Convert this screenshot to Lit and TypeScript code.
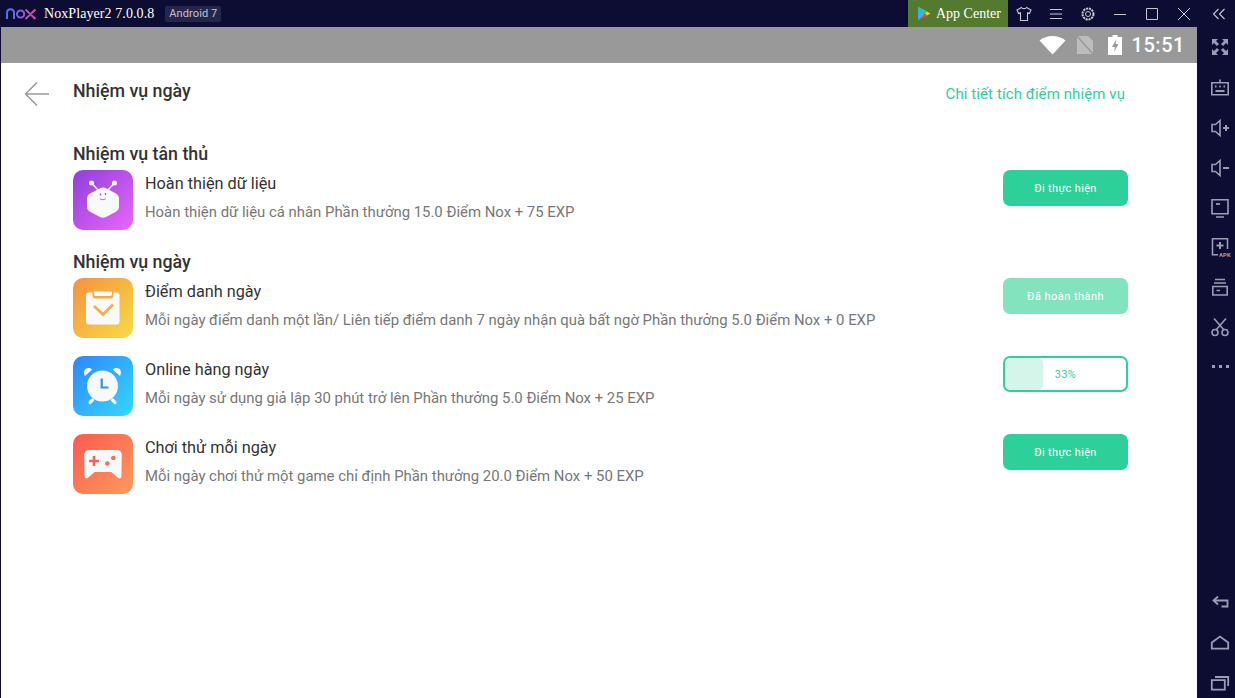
import { LitElement, html, css, svg } from "lit";
import { customElement } from "lit/decorators.js";

const sideIcon = (body: unknown, w = 22, h = 22) => html`<svg width=${w} height=${h} viewBox="0 0 22 22" fill="none" stroke="#9c9db3" stroke-width="1.6">${body}</svg>`;

const sideTop = [
  { icon: svg`<path fill="#9c9db3" stroke="none" d="M3 3h6l-2 2 3 3-2 2-3-3-2 2zM19 3v6l-2-2-3 3-2-2 3-3-2-2zM3 19v-6l2 2 3-3 2 2-3 3 2 2zM19 19h-6l2-2-3-3 2-2 3 3 2-2z"/>` },
  { icon: svg`<path d="M2.800 6.800h16.400v12H2.800zM11 6.500V3.500"/><path d="M6 10.500h1.500M10.200 10.500h1.500M14.500 10.500h1.500M6.500 15h9" stroke-width="1.800"/>` },
  { icon: svg`<path d="M3 8.500h3.500L11 4.500v15l-4.500-4H3z"/><path d="M14 12h6M17 9v6" stroke-width="2"/>` },
  { icon: svg`<path d="M3 8.500h3.500L11 4.500v15l-4.500-4H3z"/><path d="M14 12h6" stroke-width="2"/>` },
  { icon: svg`<path d="M3 3.800h16v14H3zM7 21h8"/><path d="M7 8h4" stroke-width="1.800"/>` },
  { icon: svg`<path d="M18.500 13V2.800h-15v16H9"/><path d="M11 6v7M7.500 9.500h7" stroke-width="2"/>`, apk: true },
  { icon: svg`<path d="M6 3.500h10M5 7h12M3.800 10.500h14.400v8.500H3.800zM7.500 14.500h3.500"/>` },
  { icon: svg`<path d="M5 2.500 15 14M17 2.500 7 14"/><circle cx="6" cy="16.500" r="3"/><circle cx="16" cy="16.500" r="3"/>` },
  { icon: svg`<path fill="#9c9db3" stroke="none" d="M3 9h3v3H3zM10 9h3v3h-3zM17 9h3v3h-3z"/>` },
];

const sideBottom = [
  svg`<path d="M9 5.500 4.500 9.500 9 13.500M5 9.500h13.500v6h-6" stroke-width="1.800"/>`,
  svg`<path d="M2.800 11.500 11 5.500l8.200 6v6.200H2.800z" stroke-width="1.800"/>`,
  svg`<path d="M2.800 9.200h13v9.500h-13zM6 6H19.200v9" stroke-width="1.800"/>`,
];

const iconProfile = svg`<svg width="60" height="60" viewBox="0 0 60 60">
  <defs><linearGradient id="a" x1="0" y1="0" x2="1" y2="1"><stop offset="0" stop-color="#8f3fd8"/><stop offset="1" stop-color="#ea66fb"/></linearGradient></defs>
  <rect width="60" height="60" rx="10" fill="url(#a)"/>
  <path d="M30 17.500c1 0 2 .3 3 .8l9.500 5c2 1 3.500 3 3.500 5v8.500c0 2-1.200 4-3 5l-10 5.200c-2 1-4 1-6 0l-10-5.200c-1.800-1-3-3-3-5v-8.500c0-2 1.500-4 3.500-5l9.500-5c1-.5 2-.8 3-.8z" fill="#f8f9fb"/>
  <path d="M25 20l-6-6.500M35 20l6-6.500" stroke="#f8f9fb" stroke-width="1.500"/>
  <circle cx="18.500" cy="13" r="2.500" fill="#f8f9fb"/><circle cx="41.500" cy="13" r="2.500" fill="#f8f9fb"/>
  <path d="M27.500 23.500v2M32.500 23v2" stroke="#a64be0" stroke-width="1.300"/>
  <path d="M27 28.500c1 1.600 4.500 1.600 5.500 0" stroke="#c75be8" stroke-width="1.100" fill="none"/>
</svg>`;

const iconCheck = svg`<svg width="60" height="60" viewBox="0 0 60 60">
  <defs><linearGradient id="b" x1="0" y1="0" x2="1" y2="1"><stop offset="0" stop-color="#f6913f"/><stop offset="1" stop-color="#f6dc45"/></linearGradient></defs>
  <rect width="60" height="60" rx="10" fill="url(#b)"/>
  <rect x="13" y="14.500" width="33.500" height="32" rx="3" fill="#f8f9fb"/>
  <path d="M19.500 12.500h21v5a3 3 0 0 1-3 3h-15a3 3 0 0 1-3-3z" fill="#f8a94a"/>
  <path d="M21 13.500h18v2.500a2 2 0 0 1-2 2H23a2 2 0 0 1-2-2z" fill="#f8f9fb"/>
  <path d="M21 28l9 8.500 10-10" fill="none" stroke="#f7ae45" stroke-width="2.800"/>
</svg>`;

const iconClock = svg`<svg width="60" height="60" viewBox="0 0 60 60">
  <defs><linearGradient id="c" x1="0" y1="0" x2="1" y2="1"><stop offset="0" stop-color="#2f86fb"/><stop offset="1" stop-color="#33d8ff"/></linearGradient></defs>
  <rect width="60" height="60" rx="10" fill="url(#c)"/>
  <circle cx="29.500" cy="30" r="15.500" fill="#f8f9fb"/>
  <path d="M12 20c-1.500-2-1.200-6 .8-7.200 2.500-1.500 5-1 6.200 1zM47 20c1.500-2 1.200-6-.8-7.200-2.500-1.500-5-1-6.200 1z" fill="#f8f9fb"/>
  <path d="M19.500 44l-2.500 2.500M39.500 44l2.500 2.500" stroke="#f8f9fb" stroke-width="3.200" stroke-linecap="round"/>
  <path d="M28.700 22.500v9h6.800" fill="none" stroke="#2f8ffb" stroke-width="2.200"/>
</svg>`;

const iconGame = svg`<svg width="60" height="60" viewBox="0 0 60 60">
  <defs><linearGradient id="d" x1="0" y1="0" x2="1" y2="1"><stop offset="0" stop-color="#fb5a50"/><stop offset="1" stop-color="#fe9a5c"/></linearGradient></defs>
  <rect width="60" height="60" rx="10" fill="url(#d)"/>
  <path d="M16 16h28c2.800 0 4.500 2 4.800 4.500L48.500 42c0 2-1.700 3-3.200 2l-7-6H21.700l-7 6c-1.500 1-3.200 0-3.200-2l-.3-21.500C11.500 18 13.200 16 16 16z" fill="#f8f9fb"/>
  <path d="M16 27h10M21 22v10" stroke="#f9625a" stroke-width="2.600"/>
  <circle cx="34.300" cy="29.500" r="2.300" fill="#f9715a"/><circle cx="40.300" cy="24" r="2.300" fill="#f9715a"/>
</svg>`;

interface Task { icon: unknown; title: string; desc: string; action: "go" | "done" | "progress"; }

const firstTasks: Task[] = [
  { icon: iconProfile, title: "Hoàn thiện dữ liệu", desc: "Hoàn thiện dữ liệu cá nhân Phần thưởng 15.0 Điểm Nox + 75 EXP", action: "go" },
];
const dailyTasks: Task[] = [
  { icon: iconCheck, title: "Điểm danh ngày", desc: "Mỗi ngày điểm danh một lần/ Liên tiếp điểm danh 7 ngày nhận quà bất ngờ Phần thưởng 5.0 Điểm Nox + 0 EXP", action: "done" },
  { icon: iconClock, title: "Online hàng ngày", desc: "Mỗi ngày sử dụng giả lập 30 phút trở lên Phần thưởng 5.0 Điểm Nox + 25 EXP", action: "progress" },
  { icon: iconGame, title: "Chơi thử mỗi ngày", desc: "Mỗi ngày chơi thử một game chỉ định Phần thưởng 20.0 Điểm Nox + 50 EXP", action: "go" },
];

@customElement("app-root")
export class AppRoot extends LitElement {
  static styles = css`
    :host { display: block; width: 1235px; height: 698px; overflow: hidden; background: #0d0d33; font-family: Roboto, "Noto Sans", sans-serif; }
    .titlebar { height: 27px; display: flex; align-items: center; color: #fff; }
    .logo { margin-left: 5px; width: 32px; height: 14px; }
    .name { margin-left: 7px; font: 14px "Liberation Serif", serif; letter-spacing: .08px; white-space: nowrap; }
    .badge { margin-left: 11px; background: #26264a; color: #c3c3cf; font-size: 11px; border-radius: 2px; height: 16px; line-height: 16px; padding: 0 4px; letter-spacing: .1px; white-space: nowrap; }
    .spacer { flex: 1; }
    .appcenter { width: 100px; height: 27px; background: #547a30; display: flex; align-items: center; gap: 5px; padding-left: 9px; box-sizing: border-box; font: 14px "Liberation Serif", serif; white-space: nowrap; }
    .tool { display: flex; width: 32px; justify-content: center; align-items: center; }
    .collapse { margin-left: 3px; width: 32px; display: flex; justify-content: center; }
    .main { display: flex; height: 671px; }
    .screen { width: 1196px; margin-left: 1px; background: #fff; display: flex; flex-direction: column; }
    .status { height: 36px; background: #999; display: flex; align-items: center; justify-content: flex-end; padding-right: 12px; color: #fff; flex: none; }
    .clock { font-size: 20px; font-weight: 500; margin-left: 10px; letter-spacing: .55px; }
    .status svg { display: block; }
    .sim { margin-left: 10px; }
    .batt { margin-left: 14px; }
    .head { display: flex; align-items: center; height: 61px; flex: none; }
    .back { margin-left: 23px; width: 27px; height: 26px; }
    .head h1 { margin: -6px 0 0 22px; font-size: 17.800px; font-weight: 500; color: #333; flex: 1; }
    .link { color: #2ed09a; font-size: 15px; margin-right: 72px; letter-spacing: .09px; }
    .body { padding: 19px 69px 0 72px; }
    h2 { margin: 0 0 6px; font-size: 17.800px; line-height: 21px; font-weight: 500; color: #333; }
    .section { margin-bottom: 21px; }
    .row { display: flex; height: 60px; margin-bottom: 18px; }
    .row:last-child { margin-bottom: 0; }
    .ic { width: 60px; height: 60px; flex: none; }
    .ic svg { display: block; }
    .text { flex: 1; margin-left: 12px; padding-top: 3px; }
    .title { font-size: 16.250px; line-height: 22px; color: #333; }
    .desc { margin-top: 7px; font-size: 14.900px; line-height: 20px; color: #777; white-space: nowrap; }
    .btn { width: 125px; height: 36px; border-radius: 7px; background: #2ed09a; color: #fff; font-size: 11px; display: flex; align-items: center; justify-content: center; letter-spacing: .35px; flex: none; }
    .btn.done { background: #82e3bf; letter-spacing: .45px; }
    .btn.progress { background: #fff; box-sizing: border-box; border: 2px solid #2ed09a; color: #2ed09a; position: relative; overflow: hidden; }
    .fill { position: absolute; left: 0; top: 0; bottom: 0; border-radius: 5px; background: #d5f5ea; }
    .pct { position: relative; }
    .side { width: 38px; display: flex; flex-direction: column; padding-top: 9px; box-sizing: border-box; }
    .sbtn { height: 40px; padding-left: 12px; position: relative; }
    .apk { position: absolute; left: 22px; top: 15px; font-size: 6px; line-height: 7px; font-weight: 700; color: #9c9db3; }
    .bot { height: 40px; box-sizing: border-box; padding: 13px 0 0 12px; }
  `;

  private action(t: Task) {
    if (t.action === "done") return html`<div class="btn done">Đã hoàn thành</div>`;
    if (t.action === "progress") return html`<div class="btn progress"><div class="fill" style="width: 31%"></div><span class="pct">33%</span></div>`;
    return html`<div class="btn">Đi thực hiện</div>`;
  }

  private row(t: Task) {
    return html`<div class="row">
      <div class="ic">${t.icon}</div>
      <div class="text"><div class="title">${t.title}</div><div class="desc">${t.desc}</div></div>
      ${this.action(t)}
    </div>`;
  }

  render() {
    return html`
      <div class="titlebar">
        <svg class="logo" viewBox="0 0 32 14" fill="none" stroke-width="2">
          <defs><linearGradient id="nx" x1="0" x2="1" y1="0" y2="0"><stop offset="0" stop-color="#3f7bf0"/><stop offset=".5" stop-color="#8a5fd8"/><stop offset="1" stop-color="#ef3f95"/></linearGradient></defs>
          <path stroke="url(#nx)" d="M2 12V6c0-5 7-5 7 0v6M12 7a3.600 3.600 0 1 0 7.200 0 3.600 3.600 0 1 0-7.200 0M20.500 2.500 30.500 12M30.500 2.500 20.500 12"/>
        </svg>
        <span class="name">NoxPlayer2 7.0.0.8</span>
        <span class="badge">Android 7</span>
        <div class="spacer"></div>
        <div class="appcenter">
          <svg width="14" height="15" viewBox="0 0 14 15"><path d="M1 .5 8 7.500 1 14.500z" fill="#2fb6f2"/><path d="M1 .5 10 5.500 8 7.500z" fill="#3ccf6b"/><path d="M1 14.500 10 9.500 8 7.500z" fill="#ef4a4a"/><path d="M10 5.500 13.500 7.500 10 9.500 8 7.500z" fill="#f8c92f"/></svg>
          App Center
        </div>
        <div class="tool"><svg width="16" height="16" viewBox="0 0 16 16" fill="none" stroke="#c9c9d6" stroke-width="1.100"><path d="M5.500 1.500c.8 1.500 4.200 1.500 5 0L15 4l-1.500 3.500-2-.7V14.500h-7V6.800l-2 .7L1 4z"/></svg></div>
        <div class="tool"><svg width="14" height="14" viewBox="0 0 14 14" stroke="#c9c9d6" stroke-width="1"><path d="M1 2.500h12M1 7h12M1 11.500h12"/></svg></div>
        <div class="tool"><svg width="16" height="16" viewBox="0 0 16 16" fill="none" stroke="#c9c9d6"><circle cx="8" cy="8" r="2.500"/><circle cx="8" cy="8" r="5.500" stroke-width="2" stroke-dasharray="2.100 .8"/></svg></div>
        <div class="tool"><svg width="14" height="14" viewBox="0 0 14 14" stroke="#c9c9d6"><path d="M1 7.500h12"/></svg></div>
        <div class="tool"><svg width="14" height="14" viewBox="0 0 14 14" fill="none" stroke="#c9c9d6"><path d="M1.500 1.500h11v11h-11z"/></svg></div>
        <div class="tool"><svg width="14" height="14" viewBox="0 0 14 14" stroke="#c9c9d6"><path d="M1 1l12 12M13 1 1 13"/></svg></div>
        <div class="collapse"><svg width="14" height="12" viewBox="0 0 14 12" fill="none" stroke="#c9c9d6" stroke-width="1.100"><path d="M6.500 1 1.500 6l5 5M12.500 1l-5 5 5 5"/></svg></div>
      </div>
      <div class="main">
        <div class="screen">
          <div class="status">
            <svg width="27" height="20" viewBox="0 0 27 20"><path d="M13.500 19.500.5 5.500C7.500-.5 19.500-.5 26.500 5.500z" fill="#fff"/></svg>
            <svg class="sim" width="18" height="20" viewBox="0 0 18 20"><path d="M1 1h11l5 5v13H1z" fill="#bdbdbd"/><path d="M1 1 17 19" stroke="#999" stroke-width="1.500"/></svg>
            <svg class="batt" width="14" height="20" viewBox="0 0 14 20"><path d="M4.500 0h5v2H14v18H0V2h4.500z" fill="#fff"/><path d="M8.500 4 4 12h3l-1 5 4.500-8H7.500z" fill="#999"/></svg>
            <span class="clock">15:51</span>
          </div>
          <div class="head">
            <svg class="back" viewBox="0 0 27 26" fill="none" stroke="#999" stroke-width="1.500"><path d="M13 1.500 1.500 13 13 24.500M1.500 13H25"/></svg>
            <h1>Nhiệm vụ ngày</h1>
            <span class="link">Chi tiết tích điểm nhiệm vụ</span>
          </div>
          <div class="body">
            <div class="section"><h2>Nhiệm vụ tân thủ</h2>${firstTasks.map((t) => this.row(t))}</div>
            <div class="section"><h2>Nhiệm vụ ngày</h2>${dailyTasks.map((t) => this.row(t))}</div>
          </div>
        </div>
        <div class="side">
          ${sideTop.map((s) => html`<div class="sbtn">${sideIcon(s.icon)}${s.apk ? html`<span class="apk">APK</span>` : ""}</div>`)}
          <div class="spacer"></div>
          ${sideBottom.map((b) => html`<div class="bot">${sideIcon(b)}</div>`)}
        </div>
      </div>
    `;
  }
}
